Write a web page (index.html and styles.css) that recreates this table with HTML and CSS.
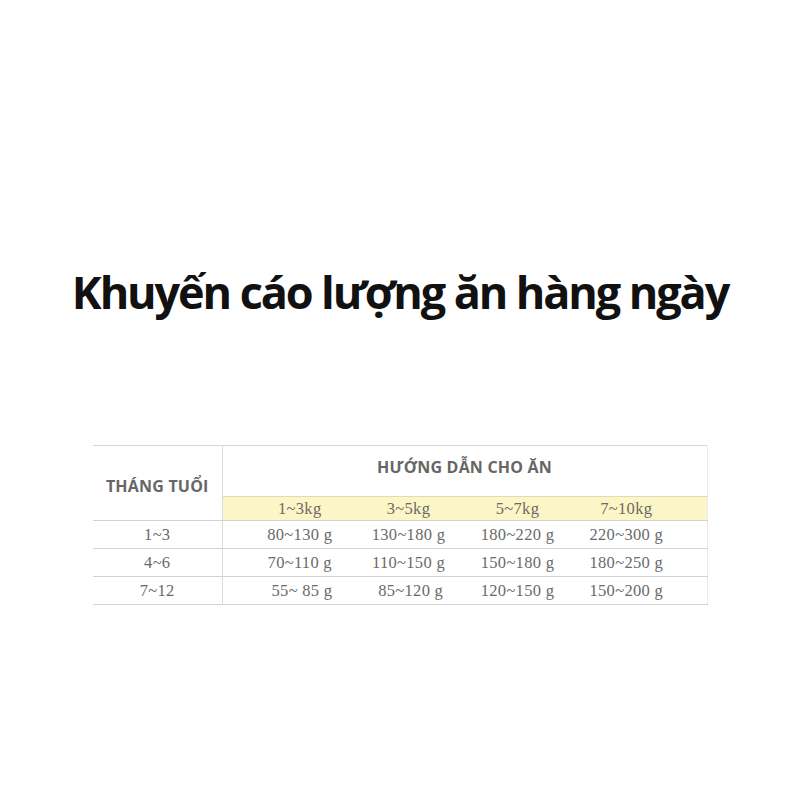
FILE: index.html
```html
<!DOCTYPE html>
<html lang="vi">
<head>
<meta charset="utf-8">
<title>Khuyến cáo lượng ăn hàng ngày</title>
<link rel="stylesheet" href="styles.css">
</head>
<body>
<div class="page">
  <h1 class="title">Khuyến cáo lượng ăn hàng ngày</h1>
  <table class="feed">
    <colgroup>
      <col class="c-age">
      <col class="c-a">
      <col class="c-b">
      <col class="c-c">
      <col class="c-d">
    </colgroup>
    <thead>
      <tr class="r-head">
        <th class="age-head" rowspan="2">THÁNG TUỔI</th>
        <th class="guide-head" colspan="4">HƯỚNG DẪN CHO ĂN</th>
      </tr>
      <tr class="r-weight">
        <td class="first">1~3kg</td>
        <td>3~5kg</td>
        <td>5~7kg</td>
        <td class="last">7~10kg</td>
      </tr>
    </thead>
    <tbody>
      <tr class="r-data">
        <td class="age">1~3</td>
        <td class="first">80~130 g</td>
        <td>130~180 g</td>
        <td>180~220 g</td>
        <td class="last">220~300 g</td>
      </tr>
      <tr class="r-data">
        <td class="age">4~6</td>
        <td class="first">70~110 g</td>
        <td>110~150 g</td>
        <td>150~180 g</td>
        <td class="last">180~250 g</td>
      </tr>
      <tr class="r-data">
        <td class="age">7~12</td>
        <td class="first">&nbsp;55~ 85 g</td>
        <td>&nbsp;85~120 g</td>
        <td>120~150 g</td>
        <td class="last">150~200 g</td>
      </tr>
    </tbody>
  </table>
</div>
</body>
</html>
```

FILE: styles.css
```css
html, body {
  margin: 0;
  padding: 0;
  background: #ffffff;
}

.page {
  width: 800px;
  height: 800px;
  padding-top: 262px;
  box-sizing: border-box;
}

.title {
  margin: 0;
  font-family: "Open Sans", "Noto Sans", sans-serif;
  font-weight: 700;
  font-size: 45px;
  line-height: 60px;
  letter-spacing: -2.1px;
  color: #111111;
  text-align: center;
}

.feed {
  margin: 123px 0 0 93px;
  width: 614px;
  border-collapse: collapse;
  table-layout: fixed;
  border-top: 1px solid #d6d6d6;
  border-right: 1px solid #ececec;
  background: #ffffff;
}

.c-age { width: 129px; }
.c-a { width: 132px; }
.c-b { width: 109px; }
.c-c { width: 109px; }
.c-d { width: 135px; }

.feed th,
.feed td {
  padding: 0;
  text-align: center;
  vertical-align: middle;
}

.age-head,
.guide-head {
  font-family: "Open Sans", "Noto Sans", sans-serif;
  font-weight: 700;
  font-size: 16px;
  line-height: 22px;
  color: #666666;
  letter-spacing: 0.2px;
}

.feed .age-head {
  vertical-align: top;
  padding-top: 29px;
  border-right: 1px solid #dcdcdc;
  border-bottom: 1px solid #d2d2d2;
}

.r-head { height: 51px; }

.feed .guide-head {
  vertical-align: top;
  padding-top: 10px;
}

.r-weight {
  height: 24px;
  background: #fcf6c6;
  border-top: 1px solid #dedbb8;
  border-bottom: 1px solid #d2d2d2;
}

.r-weight td,
.r-data td {
  font-family: "Liberation Serif", "Times New Roman", serif;
  font-size: 16.5px;
  letter-spacing: 0.3px;
  color: #6a6a6a;
}

.r-data {
  height: 28px;
  border-bottom: 1px solid #d2d2d2;
}

.r-data .age {
  border-right: 1px solid #dcdcdc;
}

.first { padding-left: 23px !important; }
.last { padding-right: 26px !important; }
```
